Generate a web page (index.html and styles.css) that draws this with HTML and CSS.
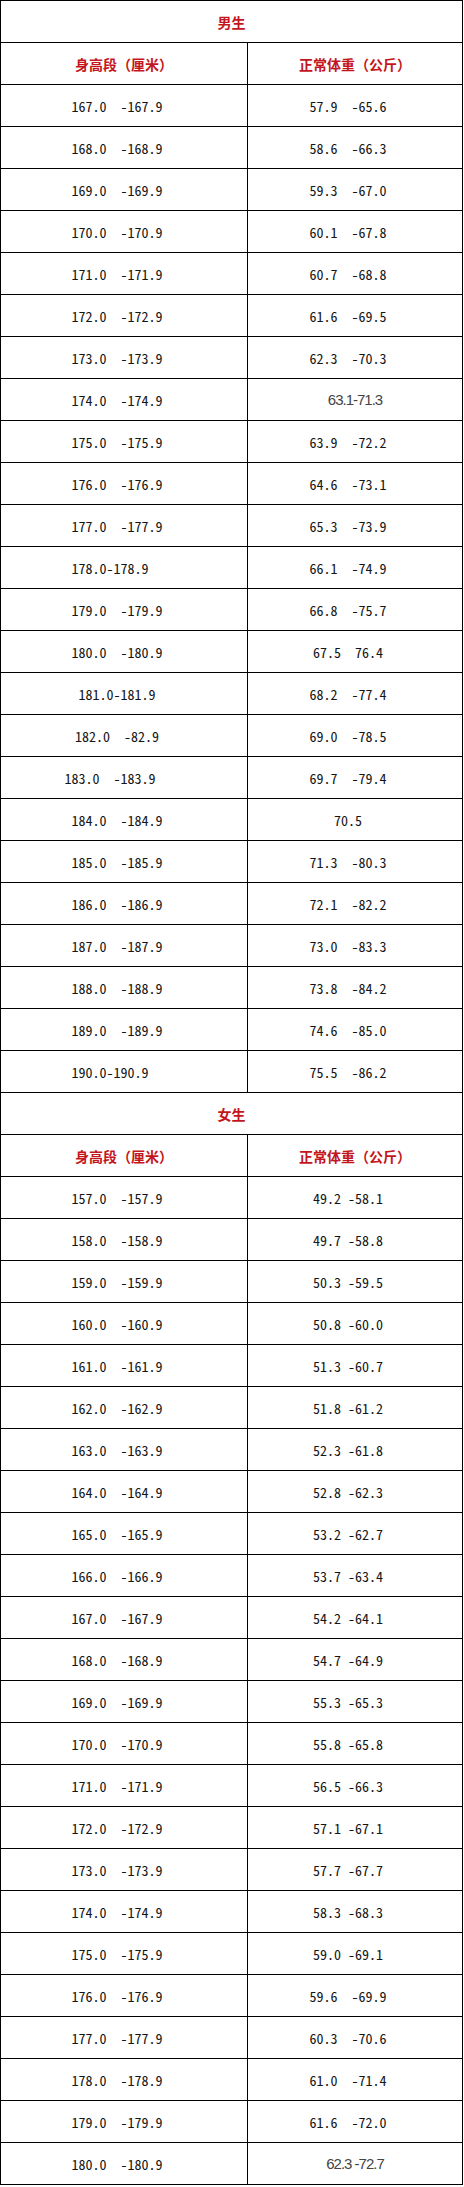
FILE: index.html
```html
<!DOCTYPE html>
<html lang="zh-CN">
<head>
<meta charset="utf-8">
<title>身高体重对照表</title>
<link rel="stylesheet" href="styles.css">
</head>
<body>
<table class="chart">
<colgroup><col class="c1"><col class="c2"></colgroup>
<tbody>
<tr><td class="title" colspan="2">男生</td></tr>
<tr><td class="head">身高段（厘米）</td><td class="head">正常体重（公斤）</td></tr>
<tr><td>167.0  -167.9</td><td>57.9  -65.6</td></tr>
<tr><td>168.0  -168.9</td><td>58.6  -66.3</td></tr>
<tr><td>169.0  -169.9</td><td>59.3  -67.0</td></tr>
<tr><td>170.0  -170.9</td><td>60.1  -67.8</td></tr>
<tr><td>171.0  -171.9</td><td>60.7  -68.8</td></tr>
<tr><td>172.0  -172.9</td><td>61.6  -69.5</td></tr>
<tr><td>173.0  -173.9</td><td>62.3  -70.3</td></tr>
<tr><td>174.0  -174.9</td><td class="sans">63.1-71.3</td></tr>
<tr><td>175.0  -175.9</td><td>63.9  -72.2</td></tr>
<tr><td>176.0  -176.9</td><td>64.6  -73.1</td></tr>
<tr><td>177.0  -177.9</td><td>65.3  -73.9</td></tr>
<tr><td class="shift">178.0-178.9</td><td>66.1  -74.9</td></tr>
<tr><td>179.0  -179.9</td><td>66.8  -75.7</td></tr>
<tr><td>180.0  -180.9</td><td>67.5  76.4</td></tr>
<tr><td>181.0-181.9</td><td>68.2  -77.4</td></tr>
<tr><td>182.0  -82.9</td><td>69.0  -78.5</td></tr>
<tr><td class="shift">183.0  -183.9</td><td>69.7  -79.4</td></tr>
<tr><td>184.0  -184.9</td><td>70.5</td></tr>
<tr><td>185.0  -185.9</td><td>71.3  -80.3</td></tr>
<tr><td>186.0  -186.9</td><td>72.1  -82.2</td></tr>
<tr><td>187.0  -187.9</td><td>73.0  -83.3</td></tr>
<tr><td>188.0  -188.9</td><td>73.8  -84.2</td></tr>
<tr><td>189.0  -189.9</td><td>74.6  -85.0</td></tr>
<tr><td class="shift">190.0-190.9</td><td>75.5  -86.2</td></tr>
<tr><td class="title" colspan="2">女生</td></tr>
<tr><td class="head">身高段（厘米）</td><td class="head">正常体重（公斤）</td></tr>
<tr><td>157.0  -157.9</td><td>49.2 -58.1</td></tr>
<tr><td>158.0  -158.9</td><td>49.7 -58.8</td></tr>
<tr><td>159.0  -159.9</td><td>50.3 -59.5</td></tr>
<tr><td>160.0  -160.9</td><td>50.8 -60.0</td></tr>
<tr><td>161.0  -161.9</td><td>51.3 -60.7</td></tr>
<tr><td>162.0  -162.9</td><td>51.8 -61.2</td></tr>
<tr><td>163.0  -163.9</td><td>52.3 -61.8</td></tr>
<tr><td>164.0  -164.9</td><td>52.8 -62.3</td></tr>
<tr><td>165.0  -165.9</td><td>53.2 -62.7</td></tr>
<tr><td>166.0  -166.9</td><td>53.7 -63.4</td></tr>
<tr><td>167.0  -167.9</td><td>54.2 -64.1</td></tr>
<tr><td>168.0  -168.9</td><td>54.7 -64.9</td></tr>
<tr><td>169.0  -169.9</td><td>55.3 -65.3</td></tr>
<tr><td>170.0  -170.9</td><td>55.8 -65.8</td></tr>
<tr><td>171.0  -171.9</td><td>56.5 -66.3</td></tr>
<tr><td>172.0  -172.9</td><td>57.1 -67.1</td></tr>
<tr><td>173.0  -173.9</td><td>57.7 -67.7</td></tr>
<tr><td>174.0  -174.9</td><td>58.3 -68.3</td></tr>
<tr><td>175.0  -175.9</td><td>59.0 -69.1</td></tr>
<tr><td>176.0  -176.9</td><td>59.6  -69.9</td></tr>
<tr><td>177.0  -177.9</td><td>60.3  -70.6</td></tr>
<tr><td>178.0  -178.9</td><td>61.0  -71.4</td></tr>
<tr><td>179.0  -179.9</td><td>61.6  -72.0</td></tr>
<tr><td>180.0  -180.9</td><td class="sans">62.3 -72.7</td></tr>
</tbody>
</table>
</body>
</html>
```
FILE: styles.css
```css
html, body {
  margin: 0;
  padding: 0;
  background: #fff;
}

.chart {
  border-collapse: collapse;
  table-layout: fixed;
  width: 462px;
}

.chart col.c1 { width: 247px; }
.chart col.c2 { width: 215px; }

.chart td {
  border: 1px solid #000;
  height: 41px;
  padding: 0 14px 0 0;
  text-align: center;
  vertical-align: middle;
  white-space: pre;
  font-family: "Noto Sans Mono CJK SC", "Liberation Mono", monospace;
  font-size: 14px;
  color: #151515;
}

.chart td.shift {
  padding-right: 28px;
}

.chart td.title,
.chart td.head {
  padding: 0;
  font-family: "Noto Sans CJK SC", sans-serif;
  font-weight: 700;
  color: #c4161c;
}

.chart td.sans {
  padding-right: 0;
  font-family: "Liberation Sans", Arial, sans-serif;
  font-size: 15px;
  letter-spacing: -1px;
  color: #444;
}
```
